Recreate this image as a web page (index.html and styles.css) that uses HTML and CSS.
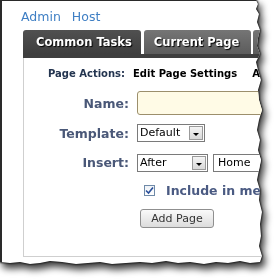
FILE: index.html
```html
<!DOCTYPE html>
<html lang="en">
<head>
    <meta charset="UTF-8">
    <title>Common Tasks</title>
    <link rel="stylesheet" href="styles.css">
</head>
<body>
    <div class="paper-wrap">
        <div class="paper">
            <div class="crumbs">
                <a href="#">Admin</a>
                <a href="#">Host</a>
            </div>

            <div class="tabs">
                <div class="tab active">Common Tasks</div>
                <div class="tab">Current Page</div>
                <div class="tab">Add</div>
            </div>

            <div class="panel">
                <div class="actions">
                    <span class="actions-label">Page Actions:</span>
                    <span class="action">Edit Page Settings</span>
                    <span class="action">Add</span>
                </div>

                <div class="form">
                    <label class="lbl">Name:</label>
                    <div class="field"><input type="text" class="name-input"></div>

                    <label class="lbl">Template:</label>
                    <div class="field">
                        <div class="select sel-default">Default<span class="arrow"></span></div>
                    </div>

                    <label class="lbl">Insert:</label>
                    <div class="field">
                        <div class="select sel-after">After<span class="arrow"></span></div>
                        <div class="select sel-home">Home</div>
                    </div>

                    <div></div>
                    <div class="field check-row">
                        <span class="checkbox">
                            <svg width="9" height="9" viewBox="0 0 9 9"><path d="M1 4.5 L3.5 7 L8 1.5" fill="none" stroke="#2a4f9a" stroke-width="1.6"/></svg>
                        </span>
                        <span class="check-text">Include in menu</span>
                    </div>

                    <div></div>
                    <div class="field"><button class="add-btn">Add Page</button></div>
                </div>
            </div>
        </div>
    </div>
</body>
</html>
```

FILE: styles.css
```css
body {
    margin: 0;
    background: #fff;
    font-family: "DejaVu Sans", Verdana, sans-serif;
}

.paper-wrap {
    width: 280px;
    height: 280px;
    filter: drop-shadow(0 0 0.8px #111) drop-shadow(0 0 0.5px #111) drop-shadow(3px 5px 3.5px rgba(0, 0, 0, 0.75));
}

.paper {
    width: 264px;
    height: 268px;
    box-sizing: border-box;
    background: #fff;
    border-left: 2px solid #2a2a2a;
    border-top: 1px solid #2a2a2a;
    overflow: hidden;
    clip-path: polygon(0 0, 256px 0, 258px 4px, 256px 9px, 259px 14px, 257px 22px, 260px 30px, 258px 38px, 257px 46px, 260px 54px, 256px 62px, 258px 70px, 261px 80px, 258px 90px, 259px 100px, 262px 110px, 259px 120px, 257px 130px, 260px 140px, 258px 150px, 261px 160px, 259px 170px, 257px 180px, 260px 190px, 259px 200px, 262px 212px, 260px 224px, 261px 236px, 259px 246px, 262px 256px, 260px 262px, 250px 263px, 240px 261px, 228px 263px, 216px 262px, 204px 264px, 190px 262px, 178px 263px, 166px 261px, 152px 263px, 140px 262px, 126px 263px, 112px 264px, 100px 262px, 88px 263px, 76px 264px, 62px 262px, 50px 261px, 40px 263px, 30px 264px, 20px 262px, 10px 263px, 0 262px);
}

.crumbs {
    padding: 8px 0 0 19px;
    height: 21px;
    font-size: 12.5px;
}

.crumbs a {
    color: #3f7fc4;
    text-decoration: none;
    margin-right: 7px;
}

.tabs {
    display: flex;
    margin-left: 21px;
    height: 24px;
    border-bottom: 4px solid #3e3e3e;
}

.tab {
    height: 24px;
    line-height: 25px;
    padding: 0 12px 0 10px;
    font-size: 11.5px;
    font-weight: bold;
    color: #fff;
    text-shadow: 1px 1px 1px #000;
    background: linear-gradient(#757575, #5c5c5c);
    border-radius: 3px 3px 0 0;
    margin-right: 2px;
    white-space: nowrap;
}

.tab.active {
    background: linear-gradient(#505050, #3e3e3e);
    padding: 0 9px 0 13px;
    margin-right: 3px;
}

.panel {
    margin-left: 21px;
    height: 198px;
    border-left: 1px solid #cfcfcf;
    border-bottom: 1px solid #cfcfcf;
}

.actions {
    display: flex;
    padding: 10px 0 0 24px;
    font-size: 10px;
    font-weight: bold;
    white-space: nowrap;
}

.actions-label {
    color: #243550;
    width: 85px;
    flex-shrink: 0;
}

.action {
    color: #000;
    margin-right: 15px;
}

.form {
    display: grid;
    grid-template-columns: 105px 1fr;
    grid-template-rows: 30px 30px 29px 27px 29px;
    column-gap: 8px;
    align-items: center;
    margin-top: 9px;
}

.lbl {
    text-align: right;
    font-size: 12.5px;
    font-weight: bold;
    color: #4a5878;
}

.field {
    display: flex;
    align-items: center;
    gap: 5px;
}

.name-input {
    width: 140px;
    height: 24px;
    box-sizing: border-box;
    border: 1px solid #9c8f6c;
    border-radius: 3px;
    background: #fffbe6;
}

.select {
    position: relative;
    height: 18px;
    box-sizing: border-box;
    border: 1px solid #7a7a7a;
    font-size: 11px;
    line-height: 16px;
    padding-left: 2px;
    color: #000;
    background: #fff;
}

.sel-default {
    width: 68px;
}

.sel-after {
    width: 71px;
}

.sel-home {
    width: 60px;
    padding-left: 4px;
}

.arrow {
    position: absolute;
    right: 1px;
    top: 1px;
    width: 14px;
    height: 14px;
    box-sizing: border-box;
    border: 1px solid #9a9a9a;
    background: linear-gradient(#f4f4f4, #d8d8d8);
}

.arrow::after {
    content: "";
    position: absolute;
    left: 3px;
    top: 6px;
    border-left: 3px solid transparent;
    border-right: 3px solid transparent;
    border-top: 3px solid #000;
}

.check-row {
    padding-left: 7px;
    gap: 11px;
}

.checkbox {
    display: flex;
    align-items: center;
    justify-content: center;
    width: 11px;
    height: 11px;
    box-sizing: border-box;
    border: 1px solid #6f8aa8;
    background: linear-gradient(#eef2f7, #fff);
}

.check-text {
    font-size: 12.5px;
    font-weight: bold;
    color: #4a5a82;
    white-space: nowrap;
}

.add-btn {
    margin-left: 3px;
    width: 74px;
    height: 19px;
    padding: 0;
    border: 1px solid #8f8f8f;
    border-radius: 3px;
    background: linear-gradient(#fafafa, #dcdcdc);
    font-family: "DejaVu Sans", Verdana, sans-serif;
    font-size: 11px;
    color: #333;
}
```
